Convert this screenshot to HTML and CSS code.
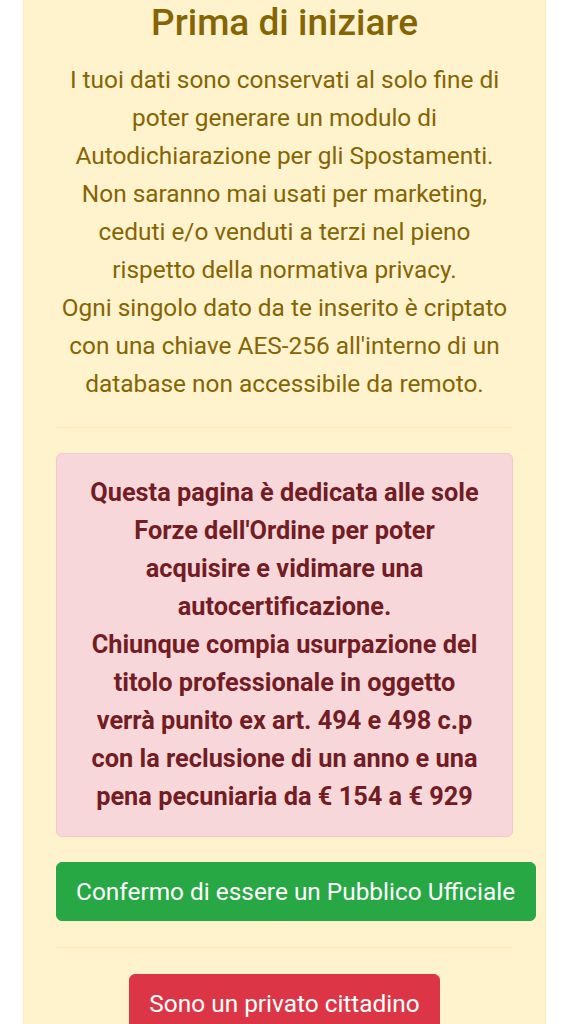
FILE: index.html
```html
<!DOCTYPE html>
<html lang="it">
<head>
<meta charset="utf-8">
<title>Prima di iniziare</title>
<link rel="stylesheet" href="styles.css">
</head>
<body>
<div class="panel">
  <h2 class="title">Prima di iniziare</h2>
  <p class="intro">I tuoi dati sono conservati al solo fine di poter generare un modulo di Autodichiarazione per gli Spostamenti. Non saranno mai usati per marketing, ceduti e/o venduti a terzi nel pieno rispetto della normativa privacy.<br>Ogni singolo dato da te inserito è criptato con una chiave AES-256 all'interno di un database non accessibile da remoto.</p>
  <hr class="divider divider-top">
  <div class="danger-box">Questa pagina è dedicata alle sole Forze dell'Ordine per poter acquisire e vidimare una autocertificazione.<br>Chiunque compia usurpazione del titolo professionale in oggetto verrà punito ex art. 494 e 498 c.p con la reclusione di un anno e una pena pecuniaria da € 154 a € 929</div>
  <div class="actions">
    <a class="btn btn-green" href="#">Confermo di essere un Pubblico Ufficiale</a>
  </div>
  <hr class="divider divider-bottom">
  <div class="actions center">
    <a class="btn btn-red" href="#">Sono un privato cittadino</a>
  </div>
</div>
</body>
</html>
```
FILE: styles.css
```css
html, body {
  margin: 0;
  padding: 0;
  background: #ffffff;
}
body {
  font-family: Roboto, "Liberation Sans", sans-serif;
  font-size: 24.4px;
  line-height: 38px;
  color: #856404;
}
.panel {
  margin: 0 24px 0 23px;
  padding: 1px 31.7px 40px;
  background: #fff3cd;
  border-left: 1.6px solid #ffeeba;
  border-right: 1.6px solid #ffeeba;
  text-align: center;
}
.title {
  margin: 0 0 16px;
  font-size: 37px;
  line-height: 44px;
  font-weight: 500;
  color: #856404;
}
.intro {
  margin: 0;
}
.divider {
  border: 0;
  border-top: 1.6px solid #fbe9b4;
  margin: 0;
}
.divider-top {
  margin-top: 24px;
  margin-bottom: 25.4px;
}
.danger-box {
  padding: 20px 30px;
  background: #f8d7da;
  border: 1px solid #f5c6cb;
  border-radius: 6px;
  color: #721c24;
  font-weight: 700;
  font-size: 25.33px;
}
.actions {
  margin-top: 25px;
  text-align: left;
}
.actions.center {
  text-align: center;
  margin-top: 26px;
}
.divider-bottom {
  margin-top: 26px;
}
.btn {
  display: inline-block;
  white-space: nowrap;
  padding: 9.5px 19.4px;
  border: 1.6px solid transparent;
  border-radius: 6px;
  color: #ffffff;
  text-decoration: none;
  font-size: 24.4px;
  line-height: 38px;
}
.btn-green {
  background: #28a745;
  border-color: #28a745;
}
.btn-red {
  background: #dc3545;
  border-color: #dc3545;
}
```
